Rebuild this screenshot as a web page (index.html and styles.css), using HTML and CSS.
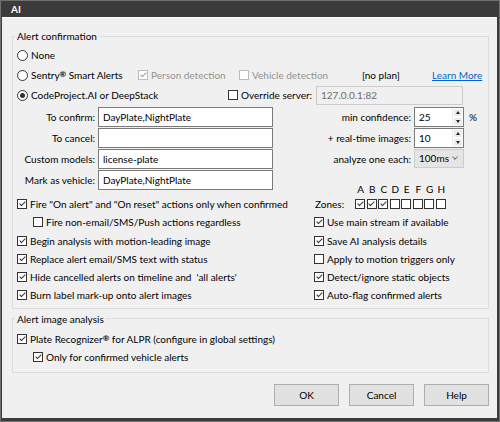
FILE: index.html
```html
<!DOCTYPE html>
<html lang="en">
<head>
    <meta charset="UTF-8">
    <title>AI</title>
    <link rel="stylesheet" href="styles.css">
</head>
<body>
<div class="window">
    <div class="titlebar">AI</div>
    <div class="dialog">
        <fieldset class="group confirm">
            <legend>Alert confirmation</legend>

            <div class="row">
                <span class="opt"><span class="radio"></span>None</span>
            </div>

            <div class="row">
                <span class="opt w-sentry"><span class="radio"></span>Sentry<sup>®</sup>&nbsp;Smart Alerts</span>
                <span class="opt disabled w-person"><span class="cb on"></span>Person detection</span>
                <span class="opt disabled w-vehicle"><span class="cb"></span>Vehicle detection</span>
                <span class="plan">[no plan]</span>
                <a class="link" href="#">Learn More</a>
            </div>

            <div class="row">
                <span class="opt w-engine"><span class="radio on"></span>CodeProject.AI or DeepStack</span>
                <span class="opt w-override"><span class="cb"></span>Override server:</span>
                <span class="textbox server">127.0.0.1:82</span>
            </div>

            <div class="fields">
                <label class="flabel">To confirm:</label>
                <span class="textbox">DayPlate,NightPlate</span>
                <span></span>
                <label class="flabel">min confidence:</label>
                <span class="spin">25<span class="spin-btns"><i class="up"></i><i class="down"></i></span></span>
                <span class="unit">%</span>

                <label class="flabel">To cancel:</label>
                <span class="textbox"></span>
                <span></span>
                <label class="flabel">+ real-time images:</label>
                <span class="spin">10<span class="spin-btns"><i class="up"></i><i class="down"></i></span></span>
                <span></span>

                <label class="flabel">Custom models:</label>
                <span class="textbox">license-plate</span>
                <span></span>
                <label class="flabel">analyze one each:</label>
                <span class="combo">100ms<span class="chev"></span></span>
                <span></span>

                <label class="flabel">Mark as vehicle:</label>
                <span class="textbox">DayPlate,NightPlate</span>
            </div>

            <div class="options">
                <div class="col">
                    <div class="row-s"><span class="opt"><span class="cb on"></span>Fire "On alert" and "On reset" actions only when confirmed</span></div>
                    <div class="row-s indent"><span class="opt"><span class="cb"></span>Fire non-email/SMS/Push actions regardless</span></div>
                    <div class="row-s"><span class="opt"><span class="cb on"></span>Begin analysis with motion-leading image</span></div>
                    <div class="row-s"><span class="opt"><span class="cb on"></span>Replace alert email/SMS text with status</span></div>
                    <div class="row-s"><span class="opt"><span class="cb on"></span>Hide cancelled alerts on timeline and &nbsp;'all alerts'</span></div>
                    <div class="row-s"><span class="opt"><span class="cb on"></span>Burn label mark-up onto alert images</span></div>
                </div>
                <div class="col">
                    <div class="zone-letters">
                        <span>A</span><span>B</span><span>C</span><span>D</span><span>E</span><span>F</span><span>G</span><span>H</span>
                    </div>
                    <div class="row-s">
                        <span class="zlabel">Zones:</span>
                        <span class="zones">
                            <span class="cb on"></span><span class="cb on"></span><span class="cb on"></span><span class="cb"></span>
                            <span class="cb"></span><span class="cb"></span><span class="cb"></span><span class="cb"></span>
                        </span>
                    </div>
                    <div class="row-s"><span class="opt"><span class="cb on"></span>Use main stream if available</span></div>
                    <div class="row-s"><span class="opt"><span class="cb on"></span>Save AI analysis details</span></div>
                    <div class="row-s"><span class="opt"><span class="cb"></span>Apply to motion triggers only</span></div>
                    <div class="row-s"><span class="opt"><span class="cb on"></span>Detect/ignore static objects</span></div>
                    <div class="row-s"><span class="opt"><span class="cb on"></span>Auto-flag confirmed alerts</span></div>
                </div>
            </div>
        </fieldset>

        <fieldset class="group analysis">
            <legend>Alert image analysis</legend>
            <div class="row-s"><span class="opt"><span class="cb on"></span>Plate Recognizer<sup>®</sup>&nbsp;for ALPR (configure in global settings)</span></div>
            <div class="row-s indent"><span class="opt"><span class="cb on"></span>Only for confirmed vehicle alerts</span></div>
        </fieldset>

        <div class="buttons">
            <button>OK</button>
            <button>Cancel</button>
            <button>Help</button>
        </div>
    </div>
</div>
</body>
</html>
```

FILE: styles.css
```css
body {
    margin: 0;
    font-family: Lato, "Noto Sans", sans-serif;
    font-size: 10px;
    color: #000;
}

.window {
    width: 500px;
    height: 422px;
    box-sizing: border-box;
    border: 1px solid #707070;
    background: #3b3b3b;
    display: flex;
    flex-direction: column;
}

.titlebar {
    height: 16px;
    line-height: 16px;
    padding-left: 10px;
    color: #fff;
    font-weight: bold;
    font-size: 10px;
}

.dialog {
    flex: 1;
    margin: 0 2px 3px 1px;
    background: #f0f0f0;
    border-top: 1px solid #fcfcfc;
    display: flex;
    flex-direction: column;
}

/* group boxes */
.group {
    margin: 0 8px 0 10px;
    border: 1px solid #dcdcdc;
    padding: 2px 4px 3px 4px;
}

.group legend {
    padding: 0 2px;
    margin-left: -2px;
    line-height: 14px;
}

.confirm {
    margin-top: 11px;
}

.analysis {
    margin-top: 3px;
    padding-top: 4px;
    padding-bottom: 6px;
}

.row {
    display: flex;
    align-items: center;
    height: 20px;
}

.row-s {
    display: flex;
    align-items: center;
    height: 18.25px;
}

.indent {
    padding-left: 16px;
}

.opt {
    display: flex;
    align-items: center;
    white-space: nowrap;
}

.opt sup {
    font-size: 8px;
    font-weight: bold;
    vertical-align: 0;
    position: relative;
    top: -1px;
}

.disabled {
    color: #929292;
}

.w-sentry { width: 121px; }
.w-person { width: 101px; }
.w-vehicle { width: 123px; }
.w-engine { width: 211px; }
.w-override { width: 88px; }

.plan {
    width: 70px;
    white-space: nowrap;
}

.link {
    color: #0066cc;
    white-space: nowrap;
}

/* radio and check boxes */
.radio {
    width: 9px;
    height: 9px;
    border: 1px solid #333;
    border-radius: 50%;
    background: #fff;
    margin-right: 3px;
    position: relative;
    flex: none;
}

.radio.on::after {
    content: '';
    position: absolute;
    left: 2px;
    top: 2px;
    width: 5px;
    height: 5px;
    border-radius: 50%;
    background: #333;
}

.cb {
    width: 8px;
    height: 8px;
    border: 1px solid #333;
    background: #fff;
    margin-right: 3px;
    position: relative;
    flex: none;
}

.cb.on::after {
    content: '';
    position: absolute;
    left: 2.5px;
    top: 0;
    width: 2px;
    height: 5px;
    border: solid #333;
    border-width: 0 1px 1px 0;
    transform: rotate(45deg);
}

.disabled .cb {
    border-color: #bcbcbc;
}

.disabled .cb.on::after {
    border-color: #9a9a9a;
}

/* text entry controls */
.textbox {
    box-sizing: border-box;
    height: 20px;
    line-height: 18px;
    border: 1px solid #7a7a7a;
    background: #fff;
    padding-left: 4px;
    white-space: nowrap;
}

.textbox.server {
    width: 147px;
    height: 19px;
    line-height: 17px;
    border-color: #cccccc;
    background: #f0f0f0;
    color: #6d6d6d;
}

.fields {
    display: grid;
    grid-template-columns: 78px 175px 1fr auto 50px 17px;
    grid-auto-rows: 21px;
    column-gap: 3px;
    margin-top: 2px;
}

.flabel {
    text-align: right;
    line-height: 20px;
    white-space: nowrap;
}

.spin {
    box-sizing: border-box;
    height: 20px;
    line-height: 18px;
    border: 1px solid #7a7a7a;
    background: #fff;
    padding-left: 4px;
    display: flex;
    justify-content: space-between;
}

.spin-btns {
    display: flex;
    flex-direction: column;
    width: 10px;
    border-left: 1px solid #ececec;
}

.spin-btns i {
    flex: 1;
    background: #ececec;
    border: 1px solid #fff;
    display: flex;
    align-items: center;
    justify-content: center;
}

.spin-btns i::after {
    content: '';
    border-left: 2px solid transparent;
    border-right: 2px solid transparent;
}

.spin-btns .up::after {
    border-bottom: 3px solid #222;
}

.spin-btns .down::after {
    border-top: 3px solid #222;
}

.combo {
    box-sizing: border-box;
    height: 19px;
    line-height: 17px;
    border: 1px solid #cccccc;
    background: #e5e5e5;
    padding-left: 4px;
    display: flex;
    justify-content: space-between;
}

.chev {
    width: 12px;
    position: relative;
}

.chev::after {
    content: '';
    position: absolute;
    left: 2px;
    top: 5px;
    width: 3px;
    height: 3px;
    border: solid #777;
    border-width: 0 1px 1px 0;
    transform: rotate(45deg);
}

.unit {
    padding-left: 2px;
    line-height: 20px;
    color: #000;
}

/* check box columns */
.options {
    display: grid;
    grid-template-columns: 297px 1fr;
    margin-top: 4px;
}

.zone-letters {
    display: flex;
    height: 11px;
    line-height: 11px;
    margin-top: -11px;
    padding-left: 41px;
}

.zone-letters span {
    width: 11.5px;
    text-align: center;
}

.zlabel {
    width: 41px;
    padding-left: 1px;
    box-sizing: border-box;
}

.zones {
    display: flex;
}

.zones .cb {
    margin-right: 1.5px;
}

/* dialog buttons */
.buttons {
    display: flex;
    justify-content: flex-end;
    gap: 10px;
    margin-top: 11px;
    padding-right: 8px;
}

.buttons button {
    width: 65px;
    height: 22px;
    font: inherit;
    background: #e1e1e1;
    border: 1px solid #adadad;
    padding: 0;
}
```
